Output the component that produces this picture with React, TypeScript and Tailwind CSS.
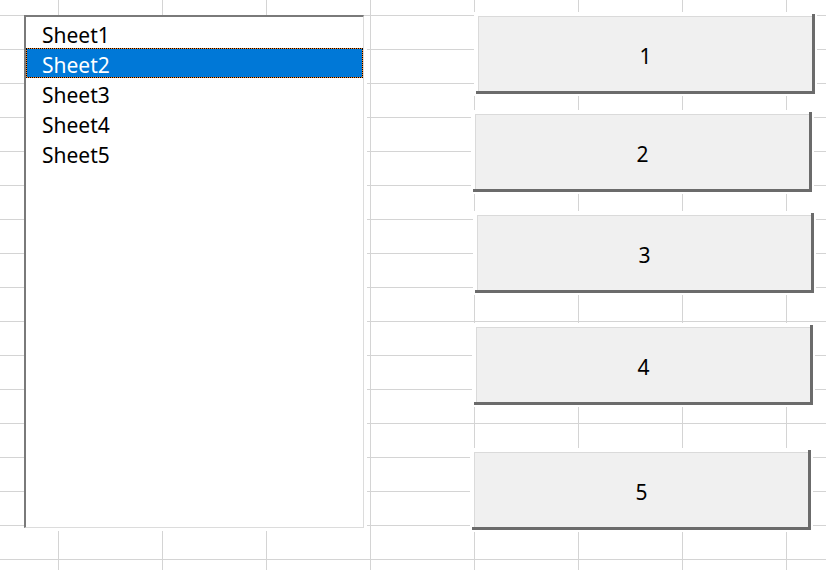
import { ReactElement } from 'react';

const sheets = ['Sheet1', 'Sheet2', 'Sheet3', 'Sheet4', 'Sheet5'];
const selected = 'Sheet2';

// form buttons sit a little unevenly on the sheet, like the original controls
const buttons = [
  { label: '1', place: 'ml-[4px]' },
  { label: '2', place: 'mt-[18px] ml-[1px]' },
  { label: '3', place: 'mt-[21px] ml-[3px]' },
  { label: '4', place: 'mt-[32px] ml-[2px]' },
  { label: '5', place: 'mt-[45px]' },
];

const SheetList = (): ReactElement => {
  return (
    <div className="mt-px w-[340px] h-[513px] shrink-0 bg-white pt-px border-t-2 border-l-2 border-t-[#7a7a7a] border-l-[#7a7a7a] border-r border-b border-r-[#dcdcdc] border-b-[#dcdcdc] shadow-[3px_3px_0_#fff]">
      {sheets.map((name) => {
        const active = name === selected;
        return (
          <div
            key={name}
            className={
              active
                ? 'h-[30px] border border-dotted border-black bg-[#ff8728]'
                : 'h-[30px] border border-transparent'
            }
          >
            <div
              className={
                active
                  ? 'h-full bg-[#0078d7] pl-[15px] text-[21px] leading-[33px] text-white'
                  : 'h-full pl-[15px] text-[21px] leading-[33px] text-black'
              }
            >
              {name}
            </div>
          </div>
        );
      })}
    </div>
  );
};

const FormButton = ({ label, place }: { label: string; place: string }): ReactElement => {
  return (
    <div className={`w-[339px] h-[80px] bg-white pt-[2px] pl-[2px] border-r-[3px] border-b-[3px] border-[#6b6b6b] outline-2 outline-white ${place}`}>
      <div className="h-full flex items-center justify-center pt-[5px] bg-[#f0f0f0] border-t border-l border-[#dadada] text-[21px] text-black">
        {label}
      </div>
    </div>
  );
};

const App = (): ReactElement => {
  return (
    <div className="w-[826px] h-[570px] overflow-hidden flex items-start pt-[14px] pl-[24px] bg-white bg-[linear-gradient(to_right,#d4d4d4_1px,transparent_1px),linear-gradient(to_bottom,#d4d4d4_1px,transparent_1px)] bg-[size:104px_34px] bg-[position:58px_15px] font-['Noto_Sans',sans-serif]">
      <SheetList />
      <div className="flex flex-col items-start ml-[108px]">
        {buttons.map((b) => (
          <FormButton key={b.label} label={b.label} place={b.place} />
        ))}
      </div>
    </div>
  );
};

export default App;
